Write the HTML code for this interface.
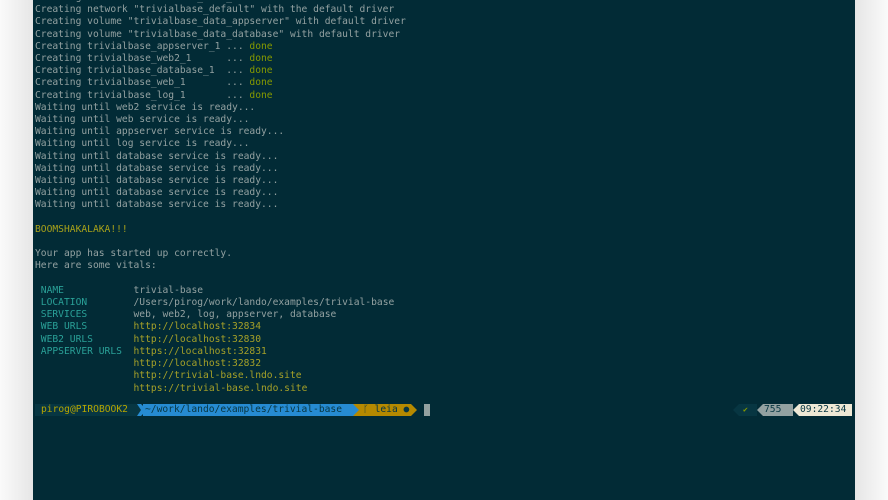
<!DOCTYPE html>
<html><head><style>
html,body{margin:0;padding:0;width:888px;height:500px;overflow:hidden;background:#f4f4f4;}
#bgl{position:absolute;left:0;top:0;width:33px;height:500px;background:linear-gradient(to right,#fafafa,#e6e6e6);}
#bgr{position:absolute;left:855px;top:0;width:33px;height:500px;background:linear-gradient(to left,#fafafa,#e6e6e6);}
#term{position:absolute;left:33px;top:0;width:822px;height:500px;background:#022b36;}
pre{position:absolute;left:2px;top:-8px;margin:0;font-family:"DejaVu Sans Mono","Liberation Mono",monospace;font-size:9.65px;line-height:12.2px;color:#93a1a1;}
.g{color:#859900}.y{color:#a9a21a}.c{color:#2aa198}.u{color:#a5a028}
.p{position:absolute;top:404px;height:12px;font-family:"DejaVu Sans Mono",monospace;font-size:9.65px;line-height:12px;}
</style></head><body>
<div id="bgl"></div><div id="bgr"></div>
<div id="term">
<pre>Creating volume "trivialbase_data_web" with default driver
Creating network "trivialbase_default" with the default driver
Creating volume "trivialbase_data_appserver" with default driver
Creating volume "trivialbase_data_database" with default driver
Creating trivialbase_appserver_1 ... <span class="g">done</span>
Creating trivialbase_web2_1      ... <span class="g">done</span>
Creating trivialbase_database_1  ... <span class="g">done</span>
Creating trivialbase_web_1       ... <span class="g">done</span>
Creating trivialbase_log_1       ... <span class="g">done</span>
Waiting until web2 service is ready...
Waiting until web service is ready...
Waiting until appserver service is ready...
Waiting until log service is ready...
Waiting until database service is ready...
Waiting until database service is ready...
Waiting until database service is ready...
Waiting until database service is ready...
Waiting until database service is ready...

<span class="y">BOOMSHAKALAKA!!!</span>

Your app has started up correctly.
Here are some vitals:

 <span class="c">NAME</span>            trivial-base
 <span class="c">LOCATION</span>        /Users/pirog/work/lando/examples/trivial-base
 <span class="c">SERVICES</span>        web, web2, log, appserver, database
 <span class="c">WEB URLS</span>        <span class="u">http://localhost:32834</span>
 <span class="c">WEB2 URLS</span>       <span class="u">http://localhost:32830</span>
 <span class="c">APPSERVER URLS</span>  <span class="u">https://localhost:32831</span>
                 <span class="u">http://localhost:32832</span>
                 <span class="u">http://trivial-base.lndo.site</span>
                 <span class="u">https://trivial-base.lndo.site</span>
</pre>
<div class="p" style="left:2px;width:104px;background:#073642;color:#b5a500;padding-left:6px;box-sizing:border-box;">pirog@PIROBOOK2</div>
<svg style="position:absolute;left:104px;top:404px" width="12" height="12"><polygon points="0,0 4,0 10,6 4,12 0,12" fill="#268bd2"/><polygon points="0,0 4,6 0,12" fill="#073642"/></svg>
<div class="p" style="left:110px;width:210px;background:#268bd2;color:#073642;padding-left:2px;">~/work/lando/examples/trivial-base</div>
<svg style="position:absolute;left:320px;top:404px" width="12" height="12"><rect x="0" y="0" width="12" height="12" fill="#b58900"/><polygon points="0,0 6,6 0,12" fill="#268bd2"/></svg>
<div class="p" style="left:330px;width:48px;background:#b58900;color:#073642;">ᚴ leia ●</div>
<svg style="position:absolute;left:378px;top:404px" width="12" height="12"><polygon points="0,0 6,6 0,12" fill="#b58900"/></svg>
<div style="position:absolute;left:391px;top:404px;width:6px;height:12px;background:#93a1a1"></div>
<svg style="position:absolute;left:700px;top:404px" width="122" height="12">
<polygon points="0,6 6,0 24,0 24,12 6,12" fill="#073642"/>
<polygon points="24,6 30,0 60,0 60,12 30,12" fill="#93a1a1"/>
<polygon points="60,6 66,0 119,0 119,12 66,12" fill="#eee8d5"/>
</svg>
<div class="p" style="left:710px;color:#859900;font-size:8px">✔</div>
<div class="p" style="left:731px;color:#073642">755</div>
<div class="p" style="left:767px;color:#073642">09:22:34</div>
</div>
</body></html>
